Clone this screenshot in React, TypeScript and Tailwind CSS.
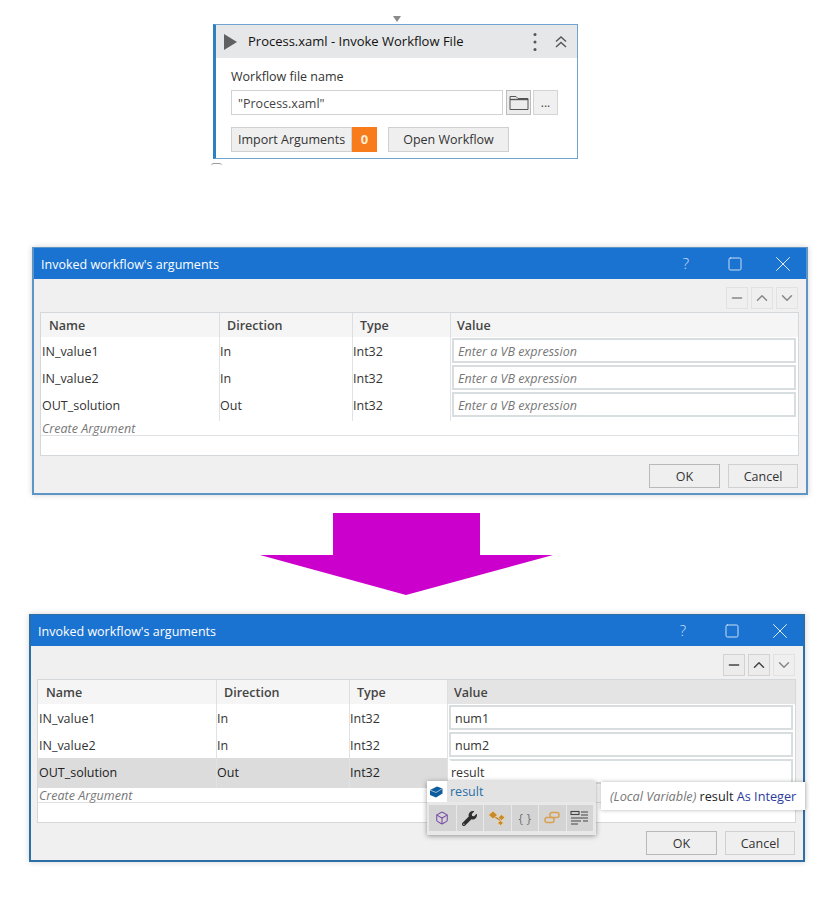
import { Box, ChevronDown, ChevronUp, Minus, Square, X } from 'lucide-react';
import { FaWrench } from 'react-icons/fa';

const FONT = "font-['Open_Sans','Noto_Sans',sans-serif]";

interface Arg {
  name: string;
  direction: string;
  value?: string;
  selected?: boolean;
}

function WorkflowCard() {
  return (
    <div className="relative ml-[213px] w-[365px] h-[135px] bg-white border border-[#6fa3d0] border-l-[3px] border-l-[#2f7fc1]">
      {/* connector marks */}
      <div className="absolute left-[177px] -top-[9px] w-0 h-0 border-l-[4px] border-r-[4px] border-t-[6px] border-l-transparent border-r-transparent border-t-[#8a8a8a]" />
      <div className="absolute -left-[5px] top-[138px] w-[11px] h-[3px] rounded-t-full border-t border-[#9a9a9a]" />
      <div className="flex items-center h-[33px] bg-[#e6e7e8]">
        <svg width="16" height="18" viewBox="0 0 16 18" className="ml-[7px]">
          <path d="M1 1 L14 9 L1 17 Z" fill="#5f6062" />
        </svg>
        <span className="ml-[9px] text-[13px] font-medium text-[#111]">Process.xaml - Invoke Workflow File</span>
        <svg width="6" height="20" viewBox="0 0 6 20" className="ml-auto" fill="#555">
          <circle cx="3" cy="2.5" r="1.5" />
          <circle cx="3" cy="10" r="1.5" />
          <circle cx="3" cy="17.5" r="1.5" />
        </svg>
        <svg width="14" height="14" viewBox="0 0 14 14" className="ml-[16px] mr-[9px]" fill="none" stroke="#555" strokeWidth="1.4">
          <path d="M2 6.5 L7 2 L12 6.5 M2 12 L7 7.5 L12 12" />
        </svg>
      </div>
      <div className="pl-[15px]">
        <div className="mt-[10px] text-[12.5px] leading-[18px] text-[#333]">Workflow file name</div>
        <div className="flex mt-[4px] h-[25px]">
          <div className="w-[272px] pl-[6px] bg-white border border-[#d0d3d6] text-[12.5px] leading-[25px] text-[#444]">"Process.xaml"</div>
          <div className="ml-[3px] w-[25px] flex items-center justify-center bg-[#ececec] border border-[#bdbdbd]">
            <svg width="20" height="16" viewBox="0 0 20 16" fill="none" stroke="#555" strokeWidth="1">
              <path d="M1 14.5 V1.5 H7 L9 3.5 H19 V14.5 Z" />
              <path d="M1 4.5 H19" strokeWidth="1.4" />
            </svg>
          </div>
          <div className="ml-[2px] w-[25px] flex items-center justify-center bg-[#f0f0f0] border border-[#d4d4d4] text-[12px] text-[#444]">...</div>
        </div>
        <div className="flex mt-[12px] h-[25px]">
          <div className="w-[121px] pl-[6px] bg-[#efefef] border border-[#d0d0d0] text-[12.5px] leading-[23px] text-[#333]">Import Arguments</div>
          <div className="w-[25px] flex items-center justify-center bg-[#f97c1c] text-[13px] font-bold text-[#fdeed6]">0</div>
          <div className="ml-[11px] w-[121px] text-center bg-[#efefef] border border-[#d0d0d0] text-[12.5px] leading-[23px] text-[#333]">Open Workflow</div>
        </div>
      </div>
    </div>
  );
}

function ToolButton({ children, active }: { children: React.ReactNode; active?: boolean }) {
  return (
    <div className={`w-[22px] h-[22px] flex items-center justify-center border ${active ? 'bg-[#ececec] border-[#d2d2d2] text-[#444]' : 'bg-[#efefef] border-[#e2e2e2] text-[#888]'}`}>
      {children}
    </div>
  );
}

function ArgRow({ arg, last }: { arg: Arg; last: boolean }) {
  const cell = `border-r border-[#dfe3e6] text-[12.5px] leading-[30px] ${arg.selected ? 'bg-[#dcdcdc] text-[#222]' : 'bg-white text-[#333]'}`;
  return (
    <div className={`grid grid-cols-[179px_133px_98px_1fr] h-[27px] ${last ? '' : 'border-b border-[#d5dadd]'}`}>
      <div className={`pl-[1px] ${cell}`}>{arg.name}</div>
      <div className={cell}>{arg.direction}</div>
      <div className={cell}>Int32</div>
      <div className="bg-white pl-[1px] pr-[2px] py-[1px]">
        <div className={`h-[25px] border-2 border-[#d8dde0] bg-white text-[12.5px] leading-[23px] ${arg.selected ? 'pl-0 border-l-white' : 'pl-[4px]'} ${arg.value ? 'text-[#333]' : 'italic text-[#777]'}`}>
          {arg.value ?? 'Enter a VB expression'}
        </div>
      </div>
    </div>
  );
}

function ArgsDialog({ args, filled, className, children }: { args: Arg[]; filled?: boolean; className: string; children?: React.ReactNode }) {
  return (
    <div className={`relative w-[776px] h-[248px] bg-[#f0f0f0] border-2 shadow-[0_0_6px_rgba(0,0,0,0.18)] ${filled ? 'border-[#2c6ea6]' : 'border-[#5c95c6]'} ${className}`}>
      <div className="flex items-center h-[31px] -mt-[1px] pl-[7px] bg-[#1a73d1] text-white">
        <span className="pt-[3px] text-[12.5px]">Invoked workflow's arguments</span>
        <span className="ml-auto w-[48px] text-center text-[15px] font-light text-[#cfe3f7]">?</span>
        <div className="w-[50px] flex justify-center">
          <Square className="w-[16px] h-[16px] text-[#d7e8f8]" strokeWidth={1.4} />
        </div>
        <div className="w-[46px] flex justify-center">
          <X className="w-[26px] h-[26px] text-[#e4effa]" strokeWidth={0.9} />
        </div>
      </div>
      <div className="flex justify-end gap-[3px] h-[33px] pt-[8px] pr-[8px]">
        <ToolButton active={filled}><Minus className="w-[16px] h-[16px]" strokeWidth={2} /></ToolButton>
        <ToolButton active={filled}><ChevronUp className="w-[18px] h-[18px]" strokeWidth={2} /></ToolButton>
        <ToolButton><ChevronDown className="w-[18px] h-[18px]" strokeWidth={2} /></ToolButton>
      </div>
      <div className={`ml-[6px] border border-[#d5d8da] bg-white ${filled ? 'mr-[7px]' : 'mr-[7px]'}`}>
        <div className="grid grid-cols-[179px_133px_98px_1fr] h-[24px] bg-[#f5f5f5] text-[12.5px] font-semibold leading-[25px] text-[#444]">
          <div className="pl-[8px] border-r border-[#dcdfe1]">Name</div>
          <div className="pl-[7px] border-r border-[#dcdfe1]">Direction</div>
          <div className="pl-[7px] border-r border-[#dcdfe1]">Type</div>
          <div className={`pl-[6px] ${filled ? 'bg-[#e4e4e4]' : ''}`}>Value</div>
        </div>
        {args.map((arg, i) => (
          <ArgRow key={arg.name} arg={arg} last={i === args.length - 1} />
        ))}
        <div className="h-[18px] pl-[1px] border-y border-[#dfe2e4] text-[12.5px] italic leading-[19px] text-[#777]">Create Argument</div>
        <div className="h-[19px]" />
      </div>
      <div className="flex justify-end gap-[8px] mt-[8px] pr-[8px]">
        <div className="w-[71px] h-[24px] text-center bg-[#efefef] border border-[#b9b9b9] text-[12.5px] leading-[23px] text-[#333]">OK</div>
        <div className="w-[70px] h-[24px] text-center bg-[#efefef] border border-[#d0d0d0] text-[12.5px] leading-[23px] text-[#333]">Cancel</div>
      </div>
      {children}
    </div>
  );
}

function IconTab({ children }: { children: React.ReactNode }) {
  return <div className="w-[26.5px] h-[26px] flex items-center justify-center bg-[#d4d4d4]">{children}</div>;
}

function CompletionPopup() {
  return (
    <>
      <div className="absolute left-[396px] top-[165px] w-[169px] h-[54px] bg-[#e8e8e8] shadow-[0_1px_5px_rgba(0,0,0,0.4)]">
        <div className="flex items-center h-[21px] bg-white">
          <svg width="15" height="14" viewBox="0 0 15 14" className="ml-[2px]">
            <path d="M1 5 L8 1.5 L13.5 3.5 L13.5 8.5 L7 12.5 L1 10 Z" fill="#0f5c9c" />
            <path d="M1 5 L7 7.5 L13.5 3.5" stroke="#bcd7ee" strokeWidth="0.8" fill="none" />
          </svg>
          <div className="ml-[3px] flex-1 h-full pl-[3px] bg-[#e3e3e3] text-[12.5px] leading-[22px] text-[#2a6fa8]">result</div>
        </div>
        <div className="flex gap-px mt-[3px] ml-[2px]">
          <IconTab><Box className="w-[14px] h-[14px] text-[#7a4aa8]" strokeWidth={1.8} /></IconTab>
          <IconTab><FaWrench className="w-[15px] h-[15px] text-[#2e2e2e]" /></IconTab>
          <IconTab>
            <svg width="21" height="19" viewBox="0 0 21 19">
              <path d="M6 7 L13 11 M13 11 L14 14" stroke="#b57d24" strokeWidth="1.2" />
              <path d="M1.5 6 L6 2 L10.5 6 L6 10 Z M11 8.5 L14.5 5.5 L18 8.5 L14.5 11.5 Z M10.5 14 L13.5 11.5 L16.5 14 L13.5 16.5 Z" fill="#c98a2c" stroke="#f2dcae" strokeWidth="0.7" />
            </svg>
          </IconTab>
          <IconTab><span className="text-[13px] font-light leading-none text-[#444]">{'{ }'}</span></IconTab>
          <IconTab>
            <svg width="16" height="14" viewBox="0 0 16 14" fill="none" stroke="#d9a050" strokeWidth="1.5">
              <rect x="6" y="1.5" width="9" height="5" rx="2" />
              <rect x="1" y="6.5" width="9" height="5" rx="2" />
            </svg>
          </IconTab>
          <IconTab>
            <svg width="19" height="16" viewBox="0 0 19 16" fill="none" stroke="#444" strokeWidth="1.1">
              <rect x="1" y="1.5" width="8" height="3" />
              <path d="M11 2 H18 M11 5 H18 M1 8 H18 M1 11 H11 M13 11 H18 M1 14 H8" />
            </svg>
          </IconTab>
        </div>
      </div>
      <div className="absolute left-[570px] top-[166px] w-[204px] h-[28px] pl-[9px] bg-white shadow-[0_0_4px_rgba(0,0,0,0.3)] text-[12.7px] leading-[28px] whitespace-nowrap">
        <span className="italic text-[#777]">(Local Variable)</span> <span className="text-[#222]">result</span> <span className="text-[#2b3a9e]">As Integer</span>
      </div>
    </>
  );
}

export default function App() {
  return (
    <div className={`${FONT} w-[840px] h-[903px] bg-white pt-[24px]`}>
      <WorkflowCard />
      <ArgsDialog
        className="ml-[32px] mt-[88px]"
        args={[
          { name: 'IN_value1', direction: 'In' },
          { name: 'IN_value2', direction: 'In' },
          { name: 'OUT_solution', direction: 'Out' },
        ]}
      />
      <svg width="294" height="84" viewBox="0 0 294 84" className="block ml-[260px] mt-[17px]">
        <path d="M73 1 H220 V43 H293 L146 83 L0 43 H73 Z" fill="#cc00cc" />
      </svg>
      <ArgsDialog
        filled
        className="ml-[29px] mt-[18px]"
        args={[
          { name: 'IN_value1', direction: 'In', value: 'num1' },
          { name: 'IN_value2', direction: 'In', value: 'num2' },
          { name: 'OUT_solution', direction: 'Out', value: 'result', selected: true },
        ]}
      >
        <CompletionPopup />
      </ArgsDialog>
    </div>
  );
}
